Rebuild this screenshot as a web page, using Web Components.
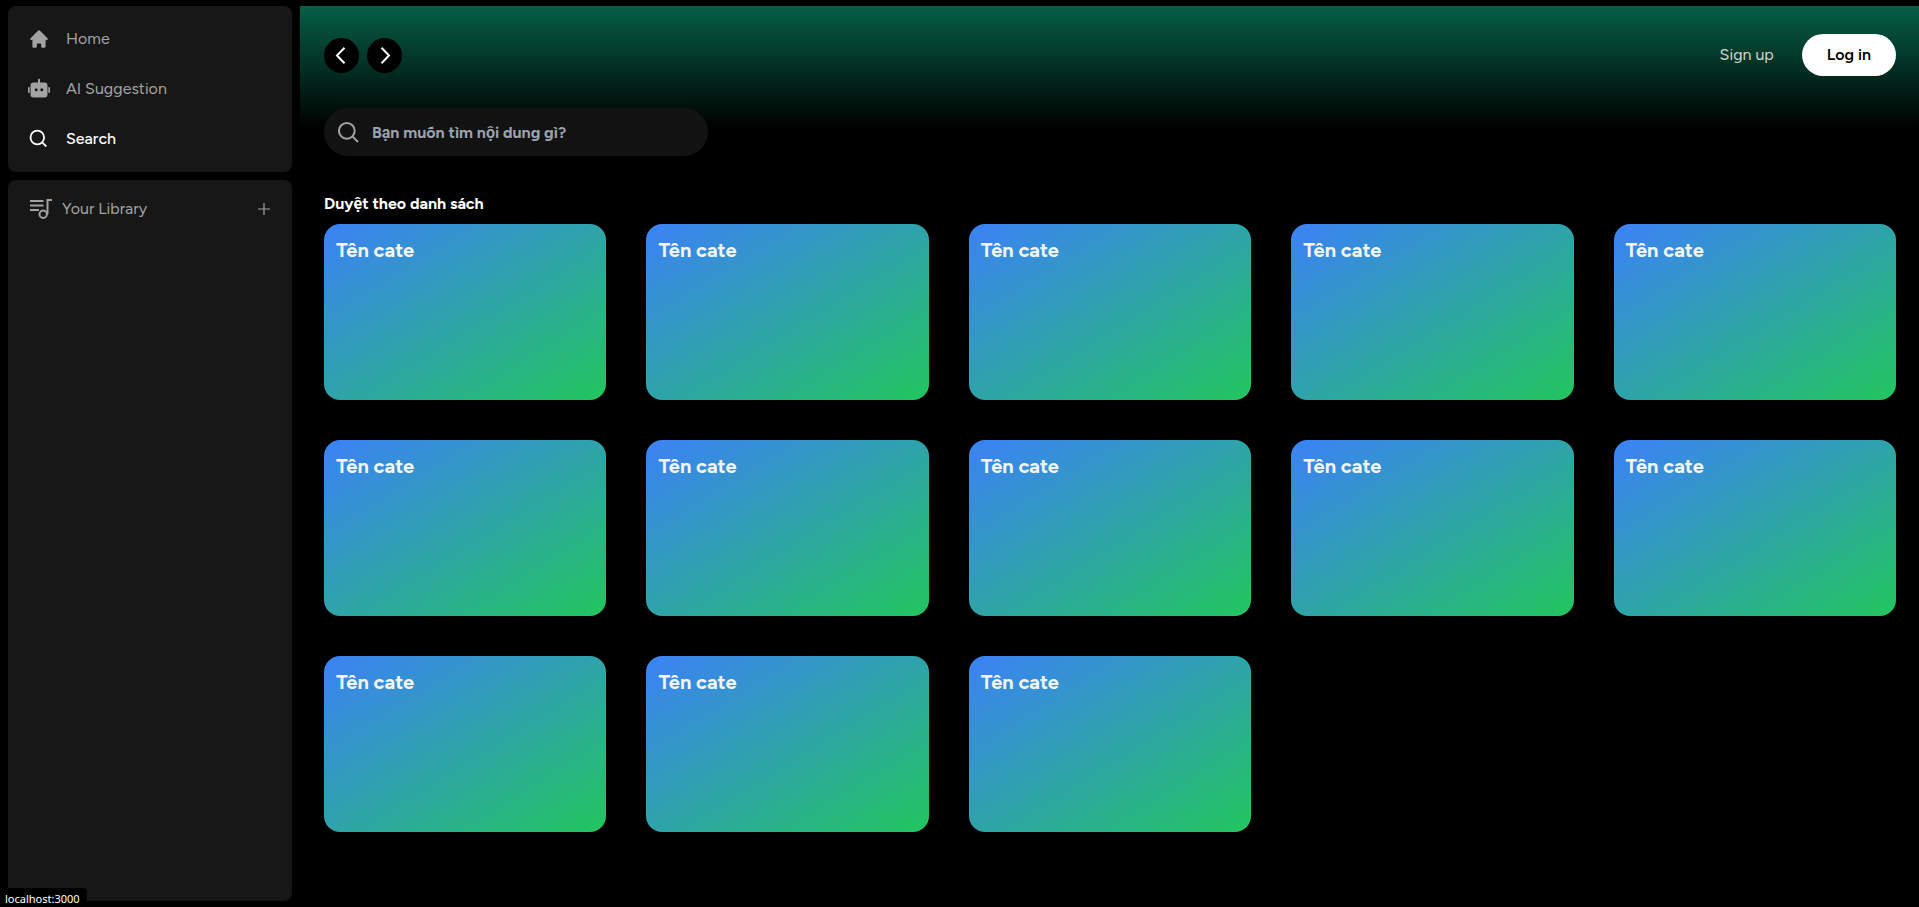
<!DOCTYPE html>
<html lang="vi">
<head>
<meta charset="utf-8">
<meta name="viewport" content="width=device-width, initial-scale=1">
<title>Search</title>
<style>
  html, body { margin: 0; background: #000; }
  body { color: #fff; font: 400 16px/24px Figtree, Roboto, sans-serif; }
</style>
</head>
<body>
<app-shell>
  <app-panel slot="side">
    <nav aria-label="Main">
      <nav-item href="#home" icon="home">Home</nav-item>
      <nav-item href="#ai" icon="robot">AI Suggestion</nav-item>
      <nav-item href="#search" icon="search" active>Search</nav-item>
    </nav>
  </app-panel>
  <app-panel slot="side" grow><library-header>Your Library</library-header></app-panel>
  <top-bar></top-bar>
  <search-box placeholder="Bạn muốn tìm nội dung gì?"></search-box>
  <category-grid heading="Duyệt theo danh sách" count="13"></category-grid>
</app-shell>
<status-bubble>localhost:3000</status-bubble>

<script>
const ICONS = {
  home: '<svg width="22" height="22" viewBox="0 0 20 20" fill="currentColor" aria-hidden="true"><path d="M10.707 2.293a1 1 0 00-1.414 0l-7 7a1 1 0 001.414 1.414L4 10.414V17a1 1 0 001 1h2a1 1 0 001-1v-2a1 1 0 011-1h2a1 1 0 011 1v2a1 1 0 001 1h2a1 1 0 001-1v-6.586l.293.293a1 1 0 001.414-1.414l-7-7z"/></svg>',
  robot: '<svg width="22" height="22" viewBox="0 0 22 22" fill="currentColor" aria-hidden="true"><path fill-rule="evenodd" d="M10 1.7a1 1 0 0 1 2 0V4.500h4.500a3 3 0 0 1 3 3v9a3 3 0 0 1-3 3h-11a3 3 0 0 1-3-3v-9a3 3 0 0 1 3-3H10zM8.200 10.200a1.500 1.500 0 1 0 0 3a1.500 1.500 0 0 0 0-3zm5.600 0a1.500 1.500 0 1 0 0 3a1.500 1.500 0 0 0 0-3z"/><rect y="9" width="1.700" height="6" rx=".8"/><rect x="20.300" y="9" width="1.700" height="6" rx=".8"/></svg>',
  search: '<svg width="22" height="22" viewBox="0 0 22 22" fill="none" stroke="currentColor" stroke-width="1.800" aria-hidden="true"><circle cx="9.300" cy="9.500" r="6.800"/><path d="M14 14.200l4.300 4.300"/></svg>',
  library: '<svg width="22" height="22" viewBox="0 0 22 22" fill="none" stroke="currentColor" stroke-width="2" aria-hidden="true"><path d="M0 3h13.500M0 7.500h13.500M0 12h9M22 2h-4.500v14"/><circle cx="13.200" cy="16.300" r="3.700"/></svg>',
  plus: '<svg width="12" height="12" viewBox="0 0 12 12" fill="none" stroke="currentColor" stroke-width="1.200" aria-hidden="true"><path d="M6 0v12M0 6h12"/></svg>',
  find: '<svg width="24" height="24" viewBox="0 0 24 24" fill="none" stroke="currentColor" stroke-width="2" aria-hidden="true"><circle cx="10.800" cy="10.800" r="7.900"/><path d="M16.400 16.400L22 22"/></svg>',
  prev: '<svg width="35" height="35" viewBox="0 0 35 35" fill="none" stroke="currentColor" stroke-width="2" aria-hidden="true"><path d="M20.500 9.800L13 17.500l7.500 7.700"/></svg>',
  next: '<svg width="35" height="35" viewBox="0 0 35 35" fill="none" stroke="currentColor" stroke-width="2" aria-hidden="true"><path d="M14.500 9.800L22 17.500l-7.500 7.700"/></svg>'
};
const BASE = '*{box-sizing:border-box}svg{display:block;flex:none}button,input{font:inherit;border:0;margin:0;padding:0;background:none;color:inherit}button{cursor:pointer}';

class Base extends HTMLElement {
  connectedCallback() {
    if (this.shadowRoot) return;
    this.attachShadow({ mode: 'open' }).innerHTML = '<style>' + BASE + this.css() + '</style>' + this.html();
  }
}

customElements.define('app-shell', class extends Base {
  css() { return `
    :host{display:grid;grid-template-columns:284px minmax(0,1fr);gap:8px;box-sizing:border-box;min-height:100vh;padding:6px 0 6px 8px}
    aside{display:flex;flex-direction:column;gap:8px}
    main{padding:28px 23px 24px 24px;background:linear-gradient(#065f46,#000) 0 0/100% 122px no-repeat}`; }
  html() { return '<aside><slot name="side"></slot></aside><main><slot></slot></main>'; }
});

customElements.define('app-panel', class extends Base {
  css() { return ':host{display:block;box-sizing:border-box;padding:8px 0;border-radius:8px;background:#171717}:host([grow]){flex:1}'; }
  html() { return '<slot></slot>'; }
});

customElements.define('nav-item', class extends Base {
  css() { return `
    :host{display:block;color:#a3a3a3}
    :host([active]){color:#fff;font-weight:500}
    a{display:flex;align-items:center;gap:16px;height:50px;padding:0 20px;color:inherit;text-decoration:none}`; }
  html() { return `<a href="${this.getAttribute('href')}">${ICONS[this.getAttribute('icon')]}<slot></slot></a>`; }
});

customElements.define('library-header', class extends Base {
  css() { return `
    :host{display:flex;align-items:center;gap:10px;height:42px;padding:0 22px;color:#a3a3a3}
    button{margin-left:auto}`; }
  html() { return ICONS.library + '<slot></slot><button type="button" aria-label="Add">' + ICONS.plus + '</button>'; }
});

customElements.define('top-bar', class extends Base {
  css() { return `
    :host{display:flex;align-items:center;justify-content:space-between}
    div{display:flex;align-items:center;gap:8px}
    .auth{gap:28px}
    .round{border-radius:50%;background:#000;color:#fff}
    .signup{color:#d4d4d4}
    .login{height:42px;padding:0 25px;border-radius:21px;background:#fff;color:#000;font-weight:600}`; }
  html() { return `<div><button type="button" class="round" aria-label="Back">${ICONS.prev}</button><button type="button" class="round" aria-label="Forward">${ICONS.next}</button></div>
    <div class="auth"><button type="button" class="signup">Sign up</button><button type="button" class="login">Log in</button></div>`; }
});

customElements.define('search-box', class extends Base {
  css() { return `
    :host{display:block;margin-top:32px}
    label{display:flex;align-items:center;gap:12px;max-width:384px;height:48px;padding:0 12px;border-radius:24px;background:#121212;color:#a3a3a3}
    input{flex:1;min-width:0;height:48px;line-height:32px;outline:0;color:#fff;font-weight:700}
    input::placeholder{color:#9ca3af;opacity:1;line-height:32px}`; }
  html() { const p = this.getAttribute('placeholder');
    return `<label>${ICONS.find}<input type="text" aria-label="${p}" placeholder="${p}"></label>`; }
});

customElements.define('category-card', class extends Base {
  css() { return `
    :host{display:block;box-sizing:border-box;height:176px;padding:12px;border-radius:16px;background:linear-gradient(to bottom right,#3b82f6,#22c55e);color:#f5f5f5}
    h3{margin:0;font-size:20px;line-height:28px;font-weight:700}`; }
  html() { return '<h3><slot></slot></h3>'; }
});

customElements.define('category-grid', class extends Base {
  css() { return `
    :host{display:block;margin-top:36px}
    h2{margin:0 0 8px;font-size:16px;line-height:24px;font-weight:700}
    section{display:grid;grid-template-columns:repeat(5,minmax(0,1fr));gap:40px}`; }
  html() { return `<h2>${this.getAttribute('heading')}</h2><section>${'<category-card>Tên cate</category-card>'.repeat(+this.getAttribute('count'))}</section>`; }
});

customElements.define('status-bubble', class extends Base {
  css() { return ':host{position:fixed;left:0;bottom:0;padding:3px 7px 0 5px;border-radius:0 4px 0 0;background:#000;color:#fff;font:400 11px/16px "Noto Sans","Open Sans",sans-serif}'; }
  html() { return '<slot></slot>'; }
});
</script>
</body>
</html>
